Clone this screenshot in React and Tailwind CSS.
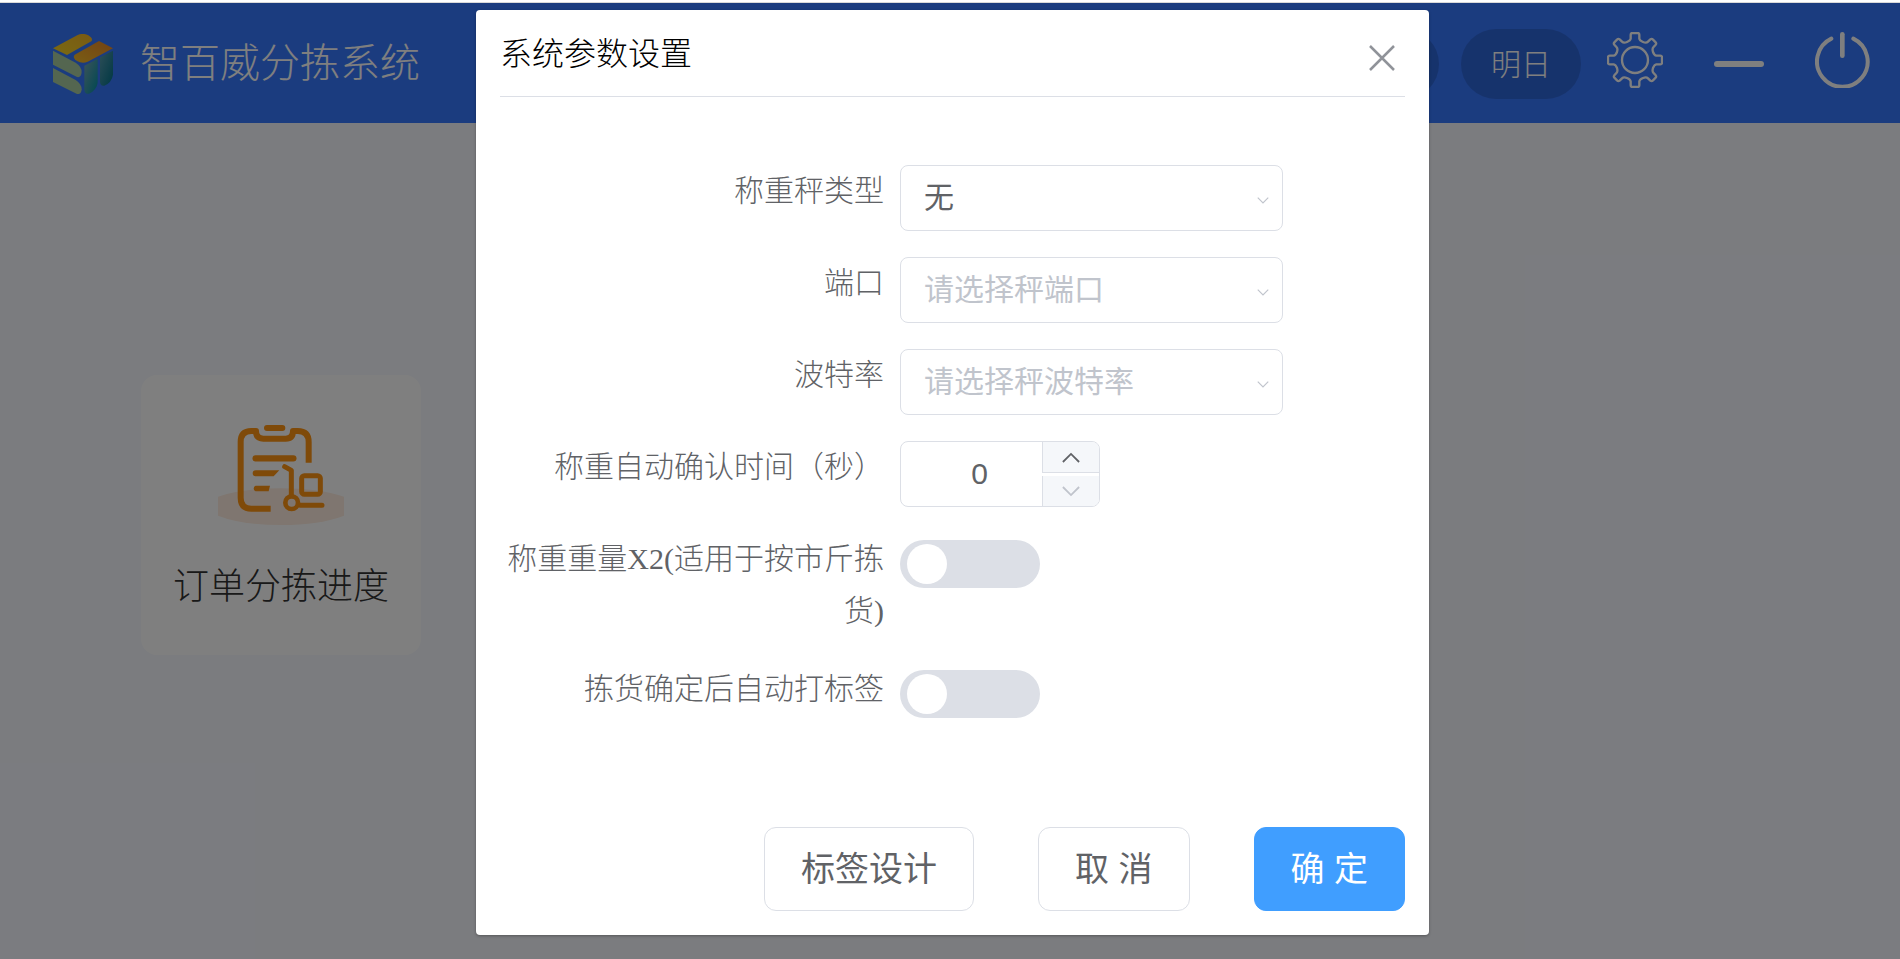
import React, { useState } from 'react';

/* ─── font stacks ──────────────────────────────────────────── */
const THIN = "font-['Liberation_Serif','Noto_Sans_CJK_SC',serif] font-light";
const SANS = "font-['Liberation_Sans','Noto_Sans_CJK_SC',sans-serif]";

/* ─── drawings ─────────────────────────────────────────────── */
const Logo = () => (
  <svg viewBox="0 0 180 180" className="size-[60px]" aria-hidden="true">
    <defs>
      <linearGradient id="lgA" x1="0" y1="1" x2="1" y2="0">
        <stop offset="0" stopColor="#f4d424"/><stop offset="1" stopColor="#f4b428"/>
      </linearGradient>
      <linearGradient id="lgB" x1="0" y1="1" x2="1" y2="0">
        <stop offset="0" stopColor="#f4bc28"/><stop offset="1" stopColor="#e88428"/>
      </linearGradient>
      <linearGradient id="lgC" x1="0" y1="0" x2="1" y2="1">
        <stop offset="0" stopColor="#78a8b4"/><stop offset="1" stopColor="#0090a4"/>
      </linearGradient>
      <linearGradient id="lgD" x1="0" y1="0" x2="1" y2="1">
        <stop offset="0" stopColor="#5a9cb0"/><stop offset="1" stopColor="#007088"/>
      </linearGradient>
    </defs>
    <path fill="url(#lgA)" d="M0 43 74 3Q92-4 106 4 122 14 115 22L42 63Z"/>
    <path fill="url(#lgB)" d="M138 21 180 43 104 83Q88 90 72 81 57 71 65 62Z"/>
    <path fill="#a8cca0" d="M0 50 68 86Q86 98 86 114 85 132 72 129L0 92Z"/>
    <path fill="#a8cca0" d="M0 102 68 138Q86 150 86 166 85 182 72 180L0 144Z"/>
    <path fill="url(#lgC)" d="M94 95 134 74V146Q131 168 108 179 94 182 94 166Z"/>
    <path fill="url(#lgD)" d="M141 70 180 50V122Q176 146 154 155 141 157 141 142Z"/>
  </svg>
);

const Gear = () => (
  <svg viewBox="0 0 168 168" className="size-14" fill="none" stroke="#fff" strokeWidth="7" strokeLinejoin="round" aria-hidden="true">
    <circle cx="84" cy="84" r="39"/>
    <path d="M71 8Q71 3 76 3H92Q97 3 97 8V20Q98 26 108 30 118 34 123 29L130 22Q134 19 138 23L146 31Q149 34 146 38L139 46Q135 50 138 60 142 70 148 71H160Q165 71 165 76V92Q165 97 160 97H148Q142 98 138 108 135 118 139 122L146 130Q149 134 146 137L138 145Q134 149 130 146L123 139Q118 134 108 138 98 142 97 148V160Q97 165 92 165H76Q71 165 71 160V148Q70 142 60 138 50 134 45 139L38 146Q34 149 30 145L22 137Q19 134 22 130L29 122Q33 118 30 108 26 98 20 97H8Q3 97 3 92V76Q3 71 8 71H20Q26 70 30 60 33 50 29 46L22 38Q19 34 22 31L30 23Q34 19 38 22L45 29Q50 34 60 30 70 26 71 20Z"/>
  </svg>
);

const Power = () => (
  <svg viewBox="0 0 165 168" className="h-14 w-[55px]" fill="none" stroke="#fff" strokeWidth="12" strokeLinecap="round" aria-hidden="true">
    <path strokeWidth="14" d="M82 7V71"/>
    <path d="M49 20A76 76 0 1 0 115 20"/>
  </svg>
);

const OrderIcon = () => (
  <svg viewBox="294 195 378 300" className="h-[100px] w-[126px]" fill="none" stroke="#ff9412" strokeLinecap="round" aria-hidden="true">
    <path fill="#ffede0" stroke="none" d="M294 410Q370 385 483 385T672 410V467Q600 495 483 495T294 467Z"/>
    <path strokeWidth="18" d="M441 204H487"/>
    <path strokeWidth="18" strokeLinecap="butt" strokeLinejoin="round" d="M566 308V246Q566 213 533 213H519Q519 236 497 236H430Q408 236 408 213H394Q362 213 362 246V413Q362 446 394 446H452"/>
    <path strokeWidth="19" d="M407 295H520"/>
    <path fill="#ff9412" stroke="none" d="M407 331H478L461 349H407A9 9 0 0 1 407 331ZM407 377H450L446 394H407A9 9 0 0 1 407 377Z"/>
    <path strokeWidth="15" strokeLinejoin="round" d="M494 320 514 331V404M540 436H606"/>
    <circle cx="515" cy="428" r="19" strokeWidth="14"/>
    <rect x="545" y="347" width="56" height="56" rx="8" strokeWidth="15"/>
  </svg>
);

const Arrow = ({ up, className }) => (
  <svg viewBox="0 0 20 12" className={className} fill="none" stroke="currentColor" strokeWidth="2" aria-hidden="true">
    <path d={up ? 'M1 11 10 2l9 9' : 'm1 1 9 9 9-9'}/>
  </svg>
);

/* ─── form parts ───────────────────────────────────────────── */
const Row = ({ id, label, children }) => (
  <div className="flex items-start">
    <label htmlFor={id}
           className={`w-[400px] shrink-0 pr-4 text-right text-[30px] leading-[52px] text-[#606266] ${THIN}`}>
      {label}
    </label>
    {children}
  </div>
);

const Select = ({ id, options, placeholder }) => {
  const [val, setVal] = useState(placeholder ? '' : options[0]);
  return (
    <div className="relative w-[383px]">
      <select id={id} value={val} onChange={e => setVal(e.target.value)}
              className={`block h-[66px] w-full appearance-none rounded-lg border border-[#dcdfe6] bg-white
                          pb-[2px] pl-[23px] pr-12 text-[30px] outline-none ${SANS}
                          ${val ? 'text-[#606266]' : 'text-[#c0c4cc]'}`}>
        {placeholder && <option value="">{placeholder}</option>}
        {options.map(o => <option key={o} value={o}>{o}</option>)}
      </select>
      <Arrow className="pointer-events-none absolute right-[14px] top-8 h-[7px] w-3 text-[#c0c4cc]"/>
    </div>
  );
};

const NumberBox = ({ id }) => {
  const [n, setN] = useState(0);
  return (
    <div className="flex h-[66px] w-[200px] overflow-hidden rounded-lg border border-[#dcdfe6] bg-white">
      <input id={id} type="text" inputMode="numeric" value={n}
             onChange={e => setN(Number(e.target.value) || 0)}
             className={`min-w-0 flex-1 pb-[2px] pl-4 text-center text-[30px] text-[#606266] outline-none ${SANS}`}/>
      <div className="flex w-[57px] flex-col justify-between">
        <button type="button" aria-label="增加" onClick={() => setN(n + 1)}
                className="flex h-[31px] items-center justify-center border-b border-l border-[#dcdfe6] bg-[#f5f7fa] text-[#606266]">
          <Arrow up className="h-[11px] w-[18px]"/>
        </button>
        <button type="button" aria-label="减少" onClick={() => setN(Math.max(0, n - 1))}
                className="flex h-[30px] items-center justify-center border-l border-[#dcdfe6] bg-[#f5f7fa] text-[#c0c4cc]">
          <Arrow className="h-[11px] w-[18px]"/>
        </button>
      </div>
    </div>
  );
};

const Switch = ({ id }) => (
  <span className="mt-[7px] flex">
    <input id={id} type="checkbox" role="switch"
           className="h-12 w-[140px] cursor-pointer appearance-none rounded-full bg-[#dcdfe6] px-[7px] py-1
                      before:block before:size-10 before:rounded-full before:bg-white
                      checked:bg-[#409eff] checked:before:ml-auto"/>
  </span>
);

const btn = `h-[84px] rounded-xl border px-9 text-[34px] ${SANS}`;

/* ─── component ────────────────────────────────────────────── */
export default function App() {
  return (
    <div className="flex min-h-screen flex-col bg-white">
      <div className="h-[3px] border-b border-[#d9d9d9]"/>

      <div className="relative flex flex-1 flex-col bg-[#f6f8ff]">
        {/* header */}
        <header className="flex h-[120px] items-center bg-[#3678fe] pl-[53px] pr-[30px] pt-[2px] text-white">
          <Logo/>
          <h1 className={`ml-[27px] text-[40px] leading-[60px] ${THIN}`}>智百威分拣系统</h1>
          <nav className="ml-auto flex items-center">
            <div className="flex gap-[22px]">
              {['今日', '明日'].map(d => (
                <button key={d} type="button"
                        className={`h-[70px] w-[120px] rounded-full bg-black/15 text-[30px] ${THIN}`}>
                  {d}
                </button>
              ))}
            </div>
            <button type="button" aria-label="设置" className="ml-[26px] pb-2"><Gear/></button>
            <button type="button" aria-label="最小化" className="ml-[51px] flex h-14 w-[50px] items-center">
              <span className="h-[6px] w-full rounded-sm bg-white"/>
            </button>
            <button type="button" aria-label="退出" className="ml-[51px] pb-2"><Power/></button>
          </nav>
        </header>

        {/* tiles */}
        <main className="px-[141px] pt-[252px]">
          <a href="#progress" className="flex size-[280px] flex-col items-center rounded-2xl bg-white pt-[50px]">
            <OrderIcon/>
            <span className={`mt-9 text-[36px] leading-[52px] text-[#333] ${THIN}`}>订单分拣进度</span>
          </a>
        </main>

        {/* mask + dialog */}
        <div className="absolute inset-0 flex items-start justify-center bg-black/50 pl-[5px] pt-[7px]">
          <section role="dialog" aria-modal="true" aria-labelledby="dlg-title"
                   className="w-[953px] rounded-sm bg-white px-6 pb-6 shadow-[0_1px_3px_rgba(0,0,0,0.3)]">
            <div className="flex h-[87px] items-start justify-between border-b border-[#dcdfe6] pr-[10px]">
              <h2 id="dlg-title" className={`mt-[18px] text-[32px] leading-[52px] text-black ${THIN}`}>系统参数设置</h2>
              <button type="button" aria-label="关闭" className="mt-[35px] text-[#909399]">
                <svg viewBox="0 0 26 26" className="size-[26px]" stroke="currentColor" strokeWidth="2.5" aria-hidden="true">
                  <path d="m1 1 24 24M25 1 1 25"/>
                </svg>
              </button>
            </div>

            <form className="mt-[68px] flex flex-col gap-[26px]">
              <Row id="scale" label="称重秤类型"><Select id="scale" options={['无']}/></Row>
              <Row id="port" label="端口"><Select id="port" options={[]} placeholder="请选择秤端口"/></Row>
              <Row id="baud" label="波特率"><Select id="baud" options={[]} placeholder="请选择秤波特率"/></Row>
              <Row id="delay" label="称重自动确认时间（秒）"><NumberBox id="delay"/></Row>
              <Row id="double" label="称重重量X2(适用于按市斤拣货)"><Switch id="double"/></Row>
              <Row id="print" label="拣货确定后自动打标签"><Switch id="print"/></Row>
            </form>

            <div className="mt-[109px] flex justify-end gap-16">
              <button type="button" className={`${btn} border-[#dcdfe6] bg-white text-[#606266]`}>标签设计</button>
              <button type="button" className={`${btn} border-[#dcdfe6] bg-white text-[#606266]`}>取 消</button>
              <button type="button" className={`${btn} border-[#409eff] bg-[#409eff] text-white`}>确 定</button>
            </div>
          </section>
        </div>
      </div>
    </div>
  );
}
